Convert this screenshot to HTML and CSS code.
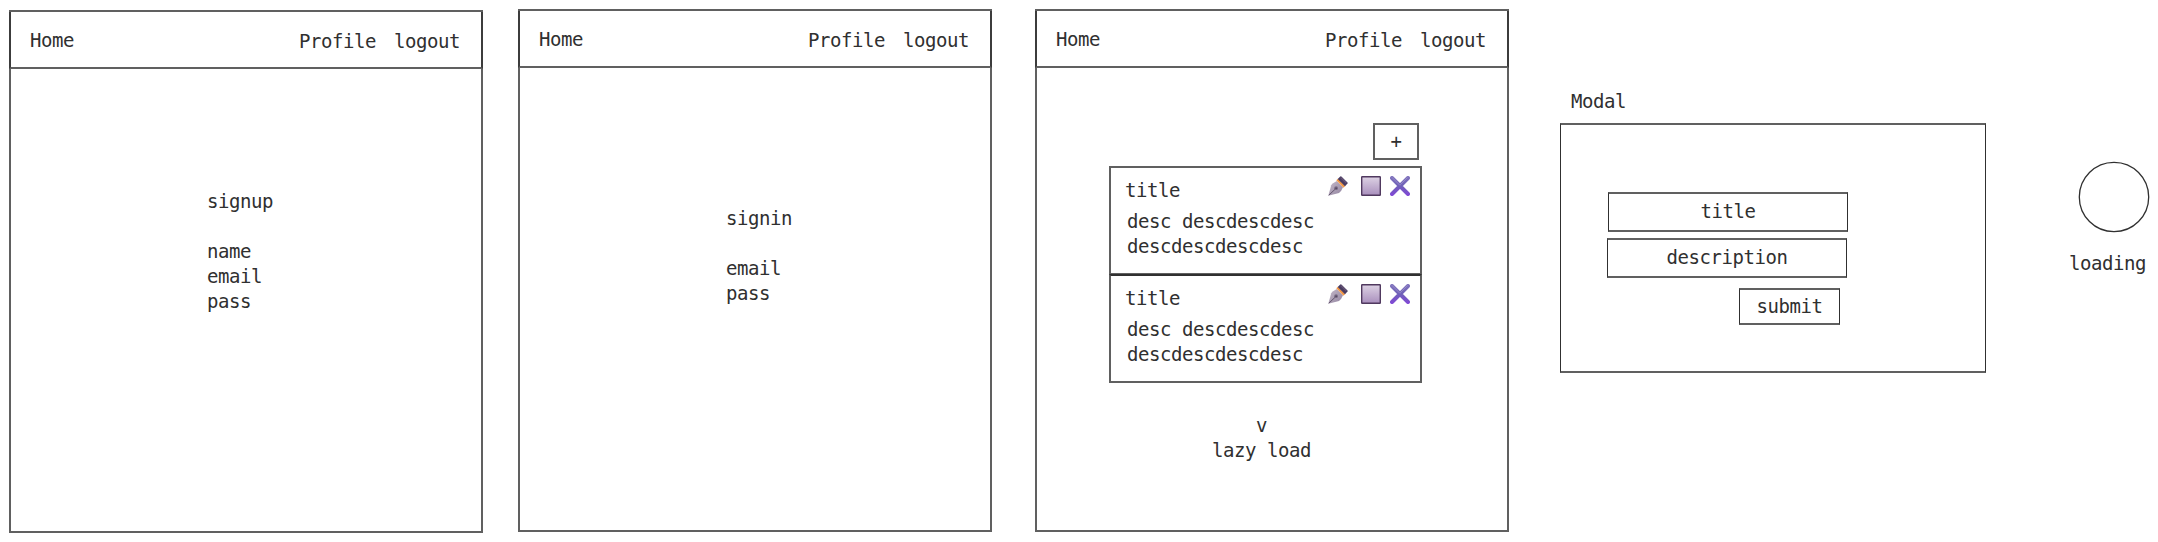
FILE: index.html
```html
<!DOCTYPE html>
<html lang="en">
<head>
<meta charset="utf-8">
<title>Wireframes</title>
<link rel="stylesheet" href="styles.css">
</head>
<body>
<svg class="defs" width="0" height="0" aria-hidden="true">
  <defs>
    <linearGradient id="box-fill" x1="0" y1="0" x2="0" y2="1"><stop offset="0" stop-color="#ddd2e4"/><stop offset="1" stop-color="#a98fbd"/></linearGradient>
    <linearGradient id="cross-fill" gradientUnits="userSpaceOnUse" x1="0" y1="0" x2="0" y2="20"><stop offset="0" stop-color="#8174bd"/><stop offset=".5" stop-color="#6f60b8"/><stop offset="1" stop-color="#8247d8"/></linearGradient>
    <linearGradient id="nib-fill" x1="0" y1="0" x2="1" y2="1"><stop offset="0" stop-color="#c5b9c9"/><stop offset="1" stop-color="#91839f"/></linearGradient>
    <symbol id="pen" viewBox="0 0 20 20">
      <path d="M.3 19.7 3.2 9.2Q4.2 7.7 8.8 5.1L15 11.3Q13.2 15.8 11 17Z" fill="url(#nib-fill)"/>
      <path d="M.8 19.2 8 12.4" stroke="#62556e" stroke-width="1"/>
      <circle cx="8.1" cy="12.2" r="1.9" fill="#796b84"/><circle cx="8.1" cy="12.2" r=".8" fill="#493d57"/>
      <path d="M8.3 4.3 10 2.7 17.3 10 15.5 11.8Z" fill="#f29745"/>
      <path d="M9.7 2.9 12.3.4Q12.8 0 13.4.4L19.5 6.4Q20 7 19.5 7.6L17 10.2Z" fill="#493b60"/>
      <path d="M12.7 1.5 18.3 7" stroke="#665477" stroke-width="1.2"/>
    </symbol>
    <symbol id="box" viewBox="0 0 20 20"><rect x=".7" y=".7" width="18.6" height="18.6" rx=".5" fill="url(#box-fill)" stroke="#50395f" stroke-width="1.4"/></symbol>
    <symbol id="cross" viewBox="0 0 20 20"><path d="M2 2 18 18M18 2 2 18" stroke="url(#cross-fill)" stroke-width="4" stroke-linecap="round"/><path d="M2.2 1.6 9.7 9.1M17.3 1.7 10.5 8.5" stroke="#9a91ca" stroke-width=".8" stroke-linecap="round"/></symbol>
  </defs>
</svg>
<main class="board">
  <section class="screen screen-signup">
    <header class="nav"><span class="home">Home</span><span>Profile</span><span>logout</span></header>
    <div class="form"><p>signup</p><p class="spaced">name</p><p>email</p><p>pass</p></div>
  </section>
  <section class="screen screen-signin">
    <header class="nav"><span class="home">Home</span><span>Profile</span><span>logout</span></header>
    <div class="form"><p>signin</p><p class="spaced">email</p><p>pass</p></div>
  </section>
  <section class="screen screen-list">
    <header class="nav"><span class="home">Home</span><span>Profile</span><span>logout</span></header>
    <div class="list">
      <div class="add">+</div>
      <article class="card">
        <div class="card-head"><span class="card-title">title</span><svg class="icon pen"><use href="#pen"/></svg><svg class="icon box"><use href="#box"/></svg><svg class="icon"><use href="#cross"/></svg></div>
        <p class="desc">desc descdescdesc<br>descdescdescdesc</p>
      </article>
      <article class="card">
        <div class="card-head"><span class="card-title">title</span><svg class="icon pen"><use href="#pen"/></svg><svg class="icon box"><use href="#box"/></svg><svg class="icon"><use href="#cross"/></svg></div>
        <p class="desc">desc descdescdesc<br>descdescdescdesc</p>
      </article>
      <p class="lazy">v<br>lazy load</p>
    </div>
  </section>
  <section class="modal-group">
    <p class="label">Modal</p>
    <div class="modal">
      <div class="field field-title">title</div>
      <div class="field">description</div>
      <div class="submit">submit</div>
    </div>
  </section>
  <section class="loader">
    <svg class="ring" viewBox="0 0 72 72"><circle cx="36" cy="36" r="34.7"/></svg>
    <p>loading</p>
  </section>
</main>
</body>
</html>
```
FILE: styles.css
```css
* { box-sizing: border-box; }
body {
  margin: 0;
  background: #fff;
  color: #303030;
  font: 19px/25px "DejaVu Sans Mono", monospace;
  letter-spacing: -0.44px;
}
p { margin: 0; }
.defs { display: block; }
.board {
  display: flex;
  align-items: flex-start;
  width: 2158px;
  height: 542px;
  padding: 9px 0 0 9px;
  overflow: hidden;
}
.screen {
  flex: none;
  width: 474px;
  height: 523px;
  border: 2px solid #606060;
}
.screen-signup { margin-top: 1px; }
.screen-signin { margin-left: 35px; }
.screen-list { margin-left: 43px; }
.nav {
  display: flex;
  height: 57px;
  margin: 0 -2px;
  padding: 17px 21px 0 19px;
  border: solid #606060;
  border-width: 0 2px 2px;
  border-left-color: #3c3c3c;
  border-right-color: #3c3c3c;
}
.nav span { margin-left: 18px; }
.nav .home { margin: -1px auto 0 0; }
.form { padding: 120px 0 0 196px; }
.screen-signin .form { padding: 138px 0 0 206px; }
.spaced { margin-top: 25px; }
.list { display: flex; flex-direction: column; width: 313px; margin: 55px 0 0 72px; }
.add {
  align-self: flex-end;
  width: 46px;
  height: 37px;
  margin-right: 3px;
  border: 2px solid #606060;
  padding-top: 4px;
  text-align: center;
}
.card {
  height: 109px;
  margin-top: 6px;
  border: 2px solid #606060;
}
.card + .card { margin-top: -1px; border-top-color: #303030; }
.card-head { display: flex; align-items: flex-start; padding: 8px 10px 0 14px; }
.card-title { margin: 2px auto 0 0; }
.icon { display: block; flex: none; width: 20px; height: 20px; fill: none; }
.icon.pen { margin-right: 13px; }
.icon.box { margin-right: 9px; }
.desc { padding: 6px 0 0 16px; }
.lazy { padding-top: 30px; margin-left: -8px; text-align: center; }
.modal-group { flex: none; width: 426px; margin: 80px 0 0 51px; }
.label { padding-left: 11px; }
.modal {
  height: 250px;
  margin-top: 9px;
  padding: 67px 0 0 46px;
  border: solid #606060;
  border-width: 2px 1px;
  border-left-color: #303030;
  border-right-color: #303030;
}
.field {
  width: 240px;
  height: 40px;
  padding-top: 5px;
  border: solid #606060;
  border-width: 2px 1px;
  border-left-color: #303030;
  border-right-color: #303030;
  text-align: center;
}
.field-title { margin: 0 0 6px 1px; }
.submit {
  width: 101px;
  height: 37px;
  margin: 10px 0 0 132px;
  padding-top: 4px;
  border: solid #606060;
  border-width: 2px 1px;
  border-left-color: #303030;
  border-right-color: #303030;
  text-align: center;
}
.loader { flex: none; margin: 152px 0 0 83px; }
.ring { display: block; width: 72px; height: 72px; margin-left: 9px; }
.ring circle { fill: none; stroke: #303030; stroke-width: 1.3; }
.loader p { margin-top: 18px; }
```
